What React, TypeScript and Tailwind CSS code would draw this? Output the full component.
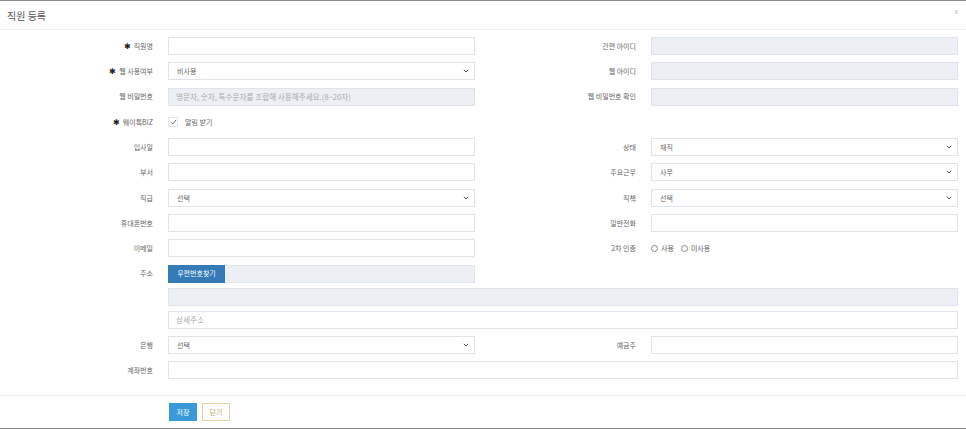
import React from "react";

const font = { fontFamily: '"Noto Sans CJK KR", "Noto Sans", sans-serif' };

function Label({ children, req }: { children?: React.ReactNode; req?: boolean }) {
  return (
    <div className="flex h-[18px] items-center justify-end pr-[15px] text-[7px] text-[#666] whitespace-nowrap">
      {req && <span className="mr-[3px] text-[8px] leading-none text-[#222]">✱</span>}
      {children}
    </div>
  );
}

function Input({ disabled, placeholder }: { disabled?: boolean; placeholder?: string }) {
  return (
    <div
      className={
        "flex h-[18px] items-center border border-[#e0e3e9] pl-[7px] text-[7.6px] text-[#aaa] whitespace-nowrap " +
        (disabled ? "bg-[#eceff4]" : "bg-white")
      }
    >
      {placeholder}
    </div>
  );
}

function Chevron() {
  return (
    <svg width="6" height="4" viewBox="0 0 6 4" className="mr-[5px]">
      <path d="M0.8 0.8 L3 3 L5.2 0.8" fill="none" stroke="#555" strokeWidth="1" />
    </svg>
  );
}

function Select({ value }: { value: string }) {
  return (
    <div className="flex h-[18px] items-center justify-between border border-[#e0e3e9] bg-white pl-[8px] text-[7px] text-[#666]">
      <span>{value}</span>
      <Chevron />
    </div>
  );
}

function Radio({ label }: { label: string }) {
  return (
    <span className="mr-[7px] flex items-center">
      <span className="mr-[3px] inline-block h-[7px] w-[7px] rounded-full border border-[#888] bg-white" />
      <span>{label}</span>
    </span>
  );
}

export default function App() {
  return (
    <div
      className="flex h-[429px] w-[966px] flex-col overflow-hidden border-t border-b border-[#8a8a8a] bg-white"
      style={font}
    >
      <div className="flex h-[29px] shrink-0 items-center justify-between border-b border-[#eeeeee] pl-[7px] pr-[8px]">
        <span className="text-[10px] text-[#5a5a5a]">직원 등록</span>
        <span className="mb-[8px] text-[7px] text-[#bbb]">x</span>
      </div>
      <div className="grid grid-cols-[168px_307px_176px_307px] gap-y-[7.3px] pb-[16px] pr-[8px] pt-[7px]">
        <Label req>직원명</Label>
        <Input />
        <Label>간편 아이디</Label>
        <Input disabled />

        <Label req>웹 사용여부</Label>
        <Select value="비사용" />
        <Label>웹 아이디</Label>
        <Input disabled />

        <Label>웹 비밀번호</Label>
        <Input disabled placeholder="영문자, 숫자, 특수문자를 조합해 사용해주세요.(8~20자)" />
        <Label>웹 비밀번호 확인</Label>
        <Input disabled />

        <Label req>웨이톡BIZ</Label>
        <div className="flex h-[18px] items-center text-[7px] text-[#666]">
          <span className="mr-[7px] flex h-[10px] w-[10px] items-center justify-center border border-[#e6e6e6] bg-white">
            <svg width="7" height="6" viewBox="0 0 7 6">
              <path d="M1 3.2 L2.8 5 L6 1" fill="none" stroke="#555" strokeWidth="0.9" />
            </svg>
          </span>
          <span>알림 받기</span>
        </div>
        <div />
        <div />

        <Label>입사일</Label>
        <Input />
        <Label>상태</Label>
        <Select value="재직" />

        <Label>부서</Label>
        <Input />
        <Label>주요근무</Label>
        <Select value="사무" />

        <Label>직급</Label>
        <Select value="선택" />
        <Label>직책</Label>
        <Select value="선택" />

        <Label>휴대폰번호</Label>
        <Input />
        <Label>일반전화</Label>
        <Input />

        <Label>이메일</Label>
        <Input />
        <Label>2차 인증</Label>
        <div className="flex h-[18px] items-center text-[7px] text-[#666]">
          <Radio label="사용" />
          <Radio label="미사용" />
        </div>

        <div className="flex flex-col">
          <Label>주소</Label>
        </div>
        <div className="col-span-3 flex flex-col gap-[5px]">
          <div className="flex w-[307px] h-[18px] border border-[#e0e3e9] bg-[#eceff4]">
            <div className="-m-px flex h-[18px] w-[57px] items-center justify-center bg-[#337ab7] text-[7px] text-white">
              우편번호찾기
            </div>
          </div>
          <Input disabled />
          <Input placeholder="상세주소" />
        </div>

        <Label>은행</Label>
        <Select value="선택" />
        <Label>예금주</Label>
        <Input />

        <Label>계좌번호</Label>
        <div className="col-span-3">
          <Input />
        </div>
      </div>
      <div className="flex flex-1 items-start gap-[5px] border-t border-[#eeeeee] pl-[169px] pt-[7px]">
        <div className="flex h-[18px] w-[28px] items-center justify-center bg-[#3a9ad9] text-[7px] text-white">
          저장
        </div>
        <div className="flex h-[18px] w-[28px] items-center justify-center border border-[#e5d3a3] bg-white text-[7px] text-[#c6a55c]">
          닫기
        </div>
      </div>
    </div>
  );
}
